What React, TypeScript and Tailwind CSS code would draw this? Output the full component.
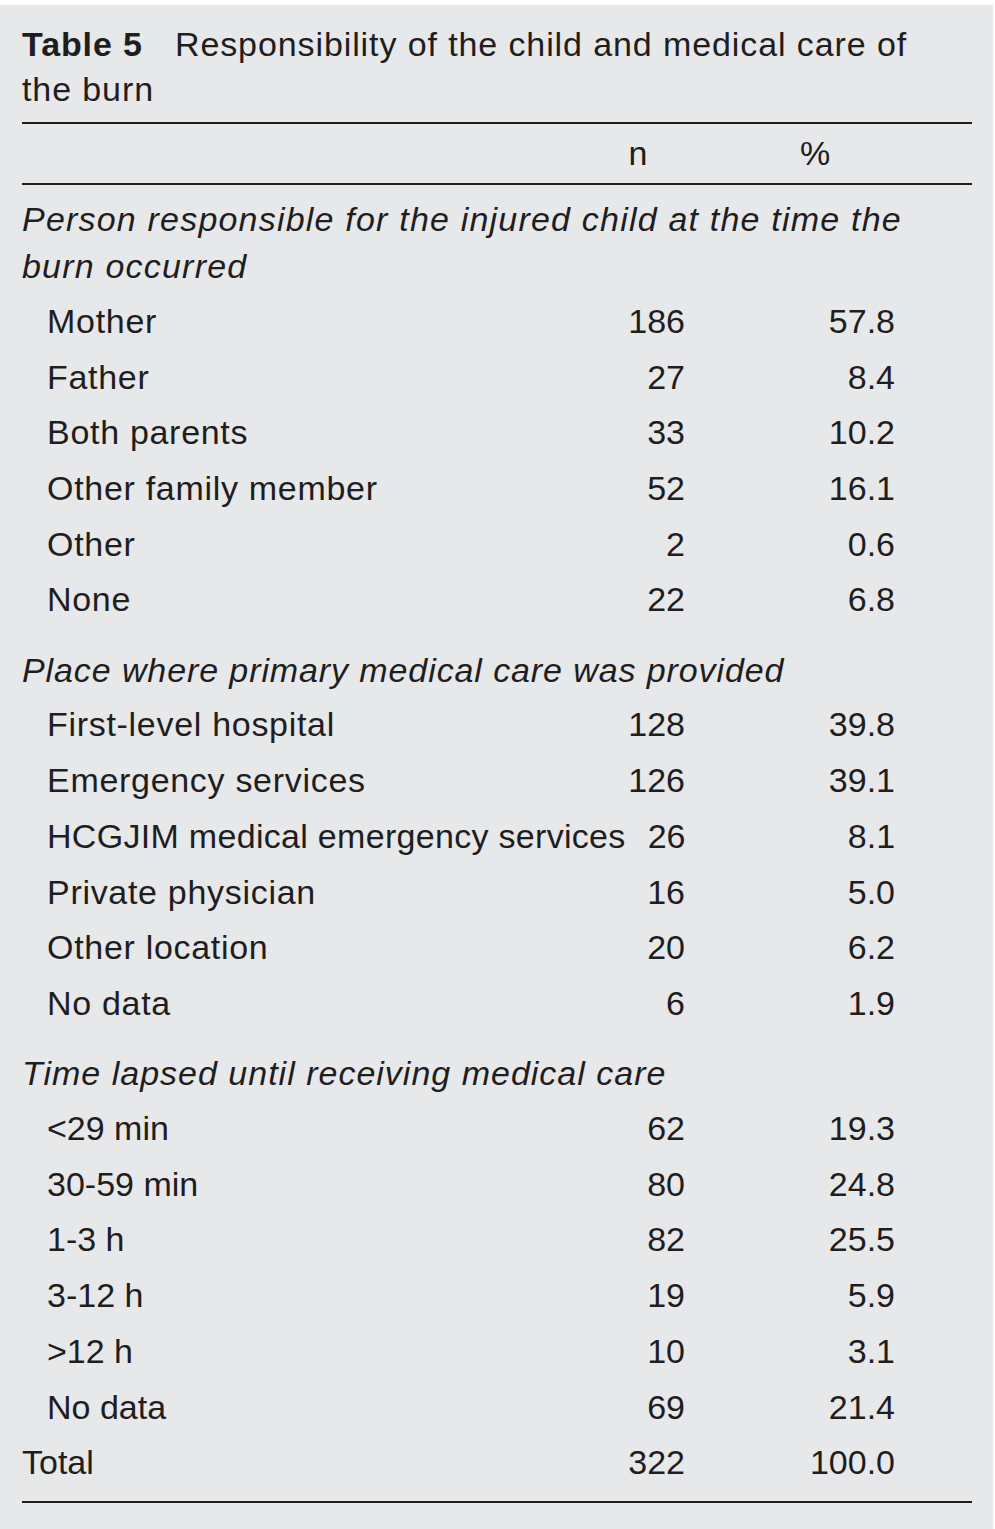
type Row = { label: string; n: string; pct: string; track?: string };

const sections: { title: React.ReactNode; first?: boolean; track: string; rows: Row[] }[] = [
  {
    title: (
      <>
        Person responsible for the injured child at the time the
        <br />
        burn occurred
      </>
    ),
    first: true,
    track: "tracking-[1.2px]",
    rows: [
      { label: "Mother", n: "186", pct: "57.8" },
      { label: "Father", n: "27", pct: "8.4" },
      { label: "Both parents", n: "33", pct: "10.2" },
      { label: "Other family member", n: "52", pct: "16.1" },
      { label: "Other", n: "2", pct: "0.6" },
      { label: "None", n: "22", pct: "6.8" },
    ],
  },
  {
    title: "Place where primary medical care was provided",
    track: "tracking-[0.9px]",
    rows: [
      { label: "First-level hospital", n: "128", pct: "39.8" },
      { label: "Emergency services", n: "126", pct: "39.1" },
      { label: "HCGJIM medical emergency services", n: "26", pct: "8.1", track: "tracking-[0.3px]" },
      { label: "Private physician", n: "16", pct: "5.0" },
      { label: "Other location", n: "20", pct: "6.2" },
      { label: "No data", n: "6", pct: "1.9" },
    ],
  },
  {
    title: "Time lapsed until receiving medical care",
    track: "tracking-[1px]",
    rows: [
      { label: "<29 min", n: "62", pct: "19.3", track: "tracking-normal" },
      { label: "30-59 min", n: "80", pct: "24.8", track: "tracking-normal" },
      { label: "1-3 h", n: "82", pct: "25.5", track: "tracking-normal" },
      { label: "3-12 h", n: "19", pct: "5.9", track: "tracking-normal" },
      { label: ">12 h", n: "10", pct: "3.1", track: "tracking-normal" },
      { label: "No data", n: "69", pct: "21.4", track: "tracking-normal" },
    ],
  },
];

function DataRow({ label, n, pct, track = "tracking-[0.7px]", indent = true }: Row & { indent?: boolean }) {
  return (
    <div className="flex h-[55.7px] items-center">
      <span className={`flex-1 whitespace-nowrap ${track} ${indent ? "pl-[25px]" : ""}`}>{label}</span>
      <span className="w-[60px] text-right">{n}</span>
      <span className="w-[210px] text-right">{pct}</span>
      <span className="w-[77px]" />
    </div>
  );
}

export default function App() {
  return (
    <div className="min-h-[1529px] bg-white pt-[5px] pr-[2px]">
      <div
        className="min-h-[1524px] bg-[#e7e8ea] px-[22px] pr-[21px] pt-[17px] text-[34px] text-[#1f1d1e]"
        style={{ fontFamily: '"Liberation Sans", Arial, sans-serif' }}
      >
        <div className="leading-[45px] tracking-[0.9px]">
          <span className="mr-[32px] font-bold">Table 5</span>
          Responsibility of the child and medical care of
          <br />
          the burn
        </div>

        <div className="mt-[10px] h-[2px] bg-[#1f1d1e]" />
        <div className="flex h-[59px] items-center">
          <span className="w-[596px]" />
          <span className="w-[40px] text-center">n</span>
          <span className="w-[137px]" />
          <span className="w-[40px] text-center">%</span>
        </div>
        <div className="h-[2px] bg-[#1f1d1e]" />

        {sections.map((s, i) => (
          <div key={i}>
            <div className={`pb-[3.5px] italic leading-[47px] ${s.track} ${s.first ? "pt-[11px]" : "pt-[19px]"}`}>
              {s.title}
            </div>
            {s.rows.map((r) => (
              <DataRow key={r.label + r.n} {...r} />
            ))}
          </div>
        ))}

        <DataRow label="Total" n="322" pct="100.0" track="tracking-normal" indent={false} />
        <div className="mt-[10px] h-[2px] bg-[#1f1d1e]" />
      </div>
    </div>
  );
}
